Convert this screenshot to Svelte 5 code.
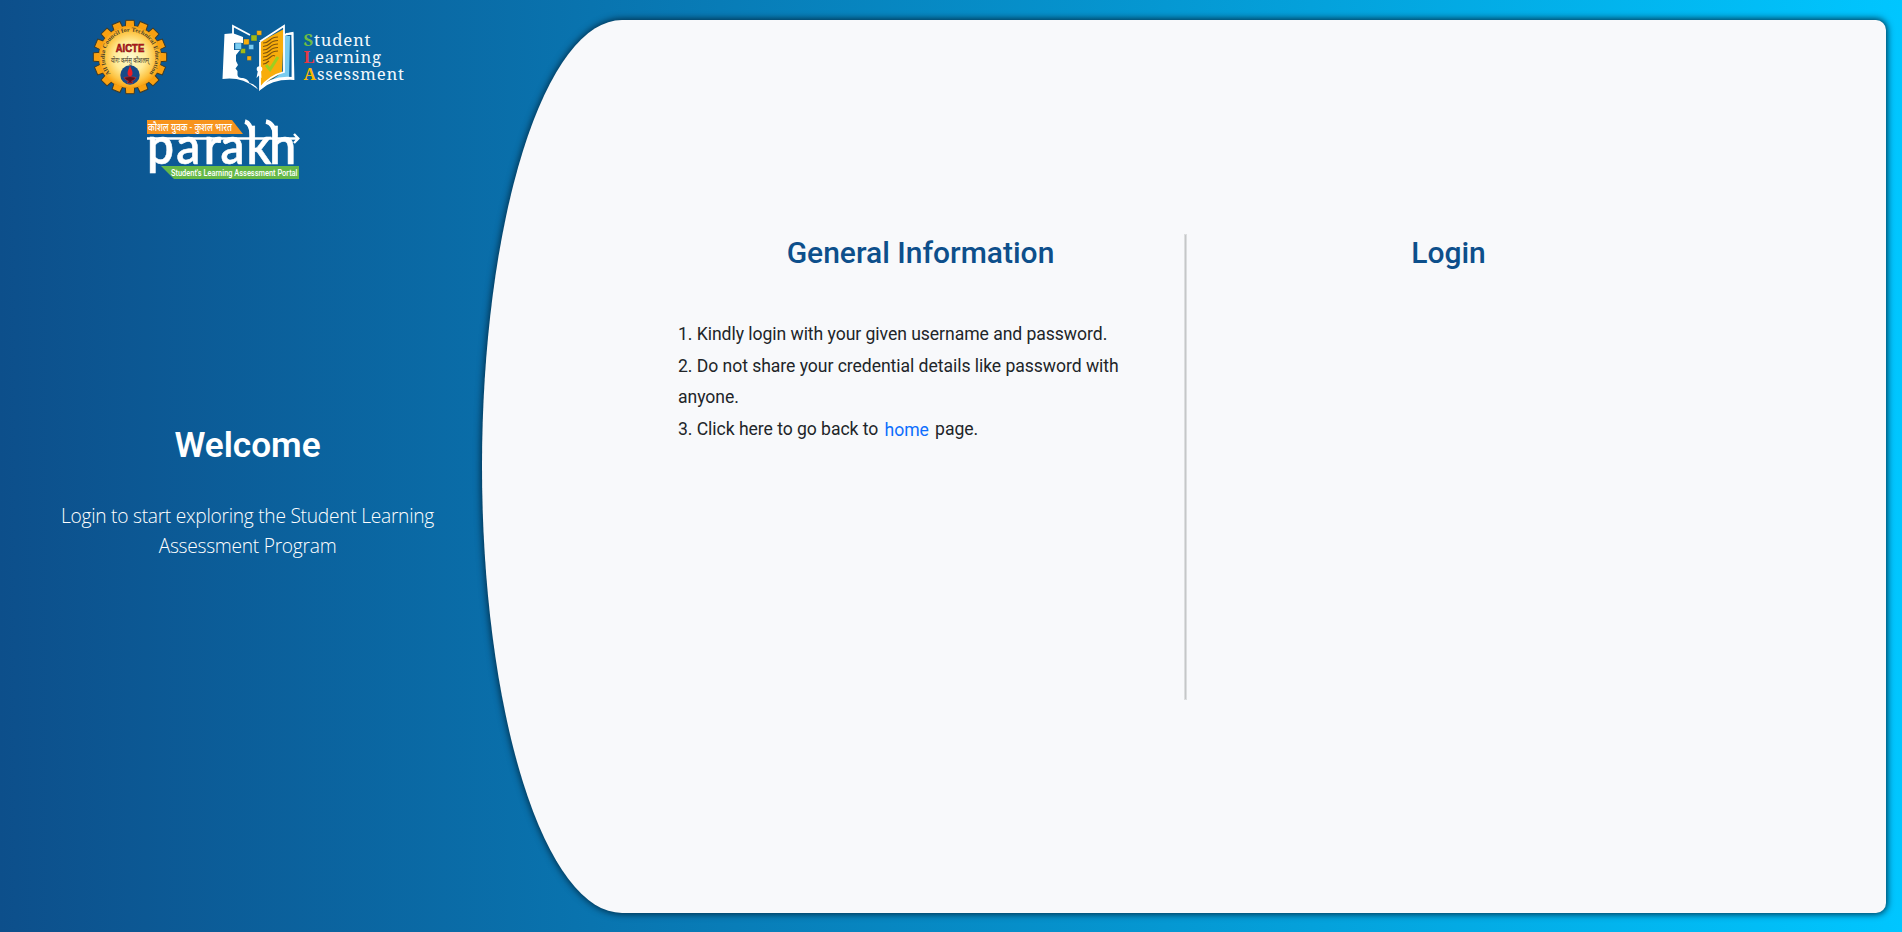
<script>
  const teeth = Array.from({ length: 16 }, (_, i) => i * 22.5);
</script>

<main>
  <aside>
    <div class="logos">
      <svg class="aicte" width="76" height="76" viewBox="-38 -38 76 76" role="img" aria-label="AICTE">
        <defs>
          <radialGradient id="gold">
            <stop offset="0" stop-color="#fffbd0" />
            <stop offset=".5" stop-color="#ffeb98" />
            <stop offset=".8" stop-color="#fdc545" />
            <stop offset="1" stop-color="#f9a010" />
          </radialGradient>
          <path id="ring" d="M-19.2 16.6A25.4 25.4 0 1 1 19.2 16.6" />
        </defs>
        <circle r="31.8" fill="#3d3a28" />
        {#each teeth as a}
          <path d="M-4.7-30L-4.2-36.7H4.2L4.7-30Z" fill="#f9a010" stroke="#3d3a28" stroke-width="1" transform="rotate({a})" />
        {/each}
        <circle r="31.2" fill="url(#gold)" />
        <text class="ringtext"><textPath href="#ring" textLength="115" lengthAdjust="spacingAndGlyphs">All India Council for Technical Education</textPath></text>
        <text class="name" x="0" y="-5" textLength="28.5" lengthAdjust="spacingAndGlyphs">AICTE</text>
        <text class="motto" x="0" y="5.5" textLength="38" lengthAdjust="spacingAndGlyphs">योगः कर्मसु कौशलम्</text>
        <circle cy="18" r="9.7" fill="#174a88" />
        <path d="M0 8.5C-1 12-2.8 14-2.4 17S2 20 2.5 17 1 12 0 8.5Z" fill="#ed1c24" />
        <path d="M-6 20.5Q0 18.5 6 20.5Q4 24 1.5 24L3 26H-3L-1.5 24Q-4 24-6 20.5Z" fill="#57131f" stroke="#e33" stroke-width=".5" />
      </svg>

      <svg class="sla" width="186" height="72" viewBox="220 22 186 72" role="img" aria-label="Student Learning Assessment">
        <path d="M224.5 34L233 33.2L243 37V43H234V50H240L236 55V61L238 65L235.5 68.5L237.5 71V75Q238 78.5 243 78Q248 79 249.5 83Q255 84 258 89.5Q242 76 222.5 79Z" fill="#fff" />
        <path d="M260 42L284 29L282 73Q269 79 260 88Z" fill="#f8ad0b" />
        <path d="M284 31L285.5 36H290L289 79Q275 77 262 87L283 72Z" fill="#79ccef" />
        <g fill="none" stroke="#fff" stroke-width="1.8">
          <path d="M260 42V89Q272 76 292.5 78V33L284 35M260 41.5L284 26V72Q269 76 260 88" />
          <path d="M286 34L292.5 33.5L293.5 79Q272 78 260 89M233 36V26L250 35" />
        </g>
        <g fill="none" stroke="#80540b" stroke-width="1.1">
          <path d="M263 43Q267 43 270 40T278 37M263 46.5Q267 46.5 270 43.5T278 40.5M263 50Q267 50 270 47T278 44M263 53.5Q267 53.5 270 50.5T278 47.5M263 57Q267 57 270 54T278 51M263 60.5Q267 60.5 270 57.5T275 56M263 64Q266 64 269 61" />
        </g>
        <path d="M266 65L270 69.5L278 57" fill="none" stroke="#9ccf20" stroke-width="3" />
        <circle cx="259.5" cy="69" r="2.8" fill="#fff" /><path d="M258 70L256.5 78L259 75.5L261.5 78L261 70Z" fill="#fff" />
        <g stroke="#0a4c83" stroke-width=".4">
          <path d="M243.5 39h5.7v5.7h-5.7zM256.7 30.5h5V35.3h-5zM247 56h4.4v4.4H247z" fill="#f8ad0b" />
          <path d="M251 35h6v6h-6zM240.5 48.5h5v5h-5z" fill="#a1b914" />
          <path d="M235 43h6.5v6.5H235zM248.7 44.5h5v5h-5z" fill="#7bcdf2" />
        </g>
        <g class="serif">
          <text x="303.5" y="46.2" textLength="67" lengthAdjust="spacing"><tspan class="s">S</tspan>tudent</text>
          <text x="303.5" y="63" textLength="77.5" lengthAdjust="spacing"><tspan class="l">L</tspan>earning</text>
          <text x="303.5" y="80" textLength="100.5" lengthAdjust="spacing"><tspan class="a">A</tspan>ssessment</text>
        </g>
      </svg>

      <svg class="parakh" width="154" height="64" viewBox="146 118 154 64" role="img" aria-label="Parakh">
        <path d="M147 120H232L243 134H147Z" fill="#f7941e" />
        <path d="M161 166H299V179H174Z" fill="#65b947" />
        <text class="hindi" x="148" y="130.8" textLength="84" lengthAdjust="spacingAndGlyphs">कौशल युवक - कुशल भारत</text>
        <text class="word" transform="translate(0 163.5) scale(1.04 1.14)" x="141.3 169.5 196 212 237 259" y="0">parakh</text>
        <path d="M147 138.5H297M294 134L298.3 138.5L294 143" fill="none" stroke="#fff" stroke-width="2.4" />
        <path d="M245 121.5Q251 123 252.4 136M266 121.5Q274 123 275.4 136" fill="none" stroke="#fff" stroke-width="4.4" />
        <text class="portal" x="171" y="175.8" textLength="126.5" lengthAdjust="spacingAndGlyphs">Student's Learning Assessment Portal</text>
      </svg>
    </div>
    <section class="welcome">
      <h1>Welcome</h1>
      <p>Login to start exploring the Student Learning<br />Assessment Program</p>
    </section>
  </aside>

  <div class="panel">
    <section class="info">
      <h2>General Information</h2>
      <div class="rules">
        <div>1. Kindly login with your given username and password.</div>
        <div>2. Do not share your credential details like password with anyone.</div>
        <div>3. Click here to go back to <a href="#home">home</a> page.</div>
      </div>
    </section>
    <div class="divider"></div>
    <section class="login"><h2>Login</h2></section>
  </div>
</main>

<style>
  :global(body) { margin: 0; overflow: hidden; }
  main {
    box-sizing: border-box;
    height: 932px;
    display: flex;
    padding: 20px 16px 19px 0;
    font-family: Roboto, sans-serif;
    background: linear-gradient(to right, #0d4f8b, #00c6ff);
  }
  aside { width: 482px; flex: none; }
  .logos {
    height: 162px;
    display: grid;
    grid-template-columns: 76px 186px;
    grid-template-rows: 98px 64px;
    column-gap: 52px;
    padding-left: 92px;
  }
  .logos svg { display: block; overflow: visible; }
  .aicte { margin-top: -1px; }
  .sla { margin-top: 2px; }
  .parakh { grid-column: 1 / -1; margin-left: 54px; }
  .ringtext { font: bold 6px "Liberation Serif", serif; fill: #494027; }
  .name { font: bold 11.5px "Liberation Sans", sans-serif; fill: #c4161c; stroke: #7c1010; stroke-width: .6; text-anchor: middle; }
  .motto { font: 7.5px "Noto Sans", sans-serif; fill: #3b3421; text-anchor: middle; }
  .serif { font: 16.8px "Noto Serif", "Liberation Serif", serif; fill: #f2f8fc; }
  .serif tspan { font-weight: bold; }
  .s { fill: #6dbc45; }
  .l { fill: #e63946; }
  .a { fill: #fbb900; }
  .hindi { font: 500 10.5px "Noto Sans", sans-serif; fill: #fff; }
  .word { font: 600 46px Lato, sans-serif; fill: #fff; stroke: #fff; stroke-width: .5; }
  .portal { font: 500 8.5px Roboto, sans-serif; fill: #fff; }
  .welcome { padding: 241px 0 0 13px; color: #fff; text-align: center; }
  h1 { margin: 0; font-size: 35.2px; line-height: 44px; font-weight: 600; }
  p { margin: 34px 0 0; font: 300 19.2px/30px "Open Sans", sans-serif; letter-spacing: -.27px; }
  .panel {
    box-sizing: border-box;
    width: 1404px;
    height: 893px;
    display: flex;
    align-items: flex-start;
    padding: 214px 0 0 178px;
    border-radius: 140px 10px 10px 140px / 446.5px 10px 10px 446.5px;
    background: #f8f9fb;
    box-shadow: 0 0 7px 1px #002b45;
  }
  .info { width: 524px; }
  .divider { width: 1px; height: 464px; border: 1px solid #dcdedf; background: #c5c7c8; }
  .login { width: 523px; }
  h2 { margin: 1px 0 0; color: #0d4f8b; font-size: 30px; font-weight: 500; line-height: 36px; text-align: center; }
  .info h2 { margin-right: 3px; }
  .rules { width: 450px; margin: 48px 0 0 18px; color: #212529; font-size: 17.6px; line-height: 31.7px; letter-spacing: -.055px; }
  a { color: #0d6efd; text-decoration: none; position: relative; top: 1px; margin: 0 2px; }
</style>
